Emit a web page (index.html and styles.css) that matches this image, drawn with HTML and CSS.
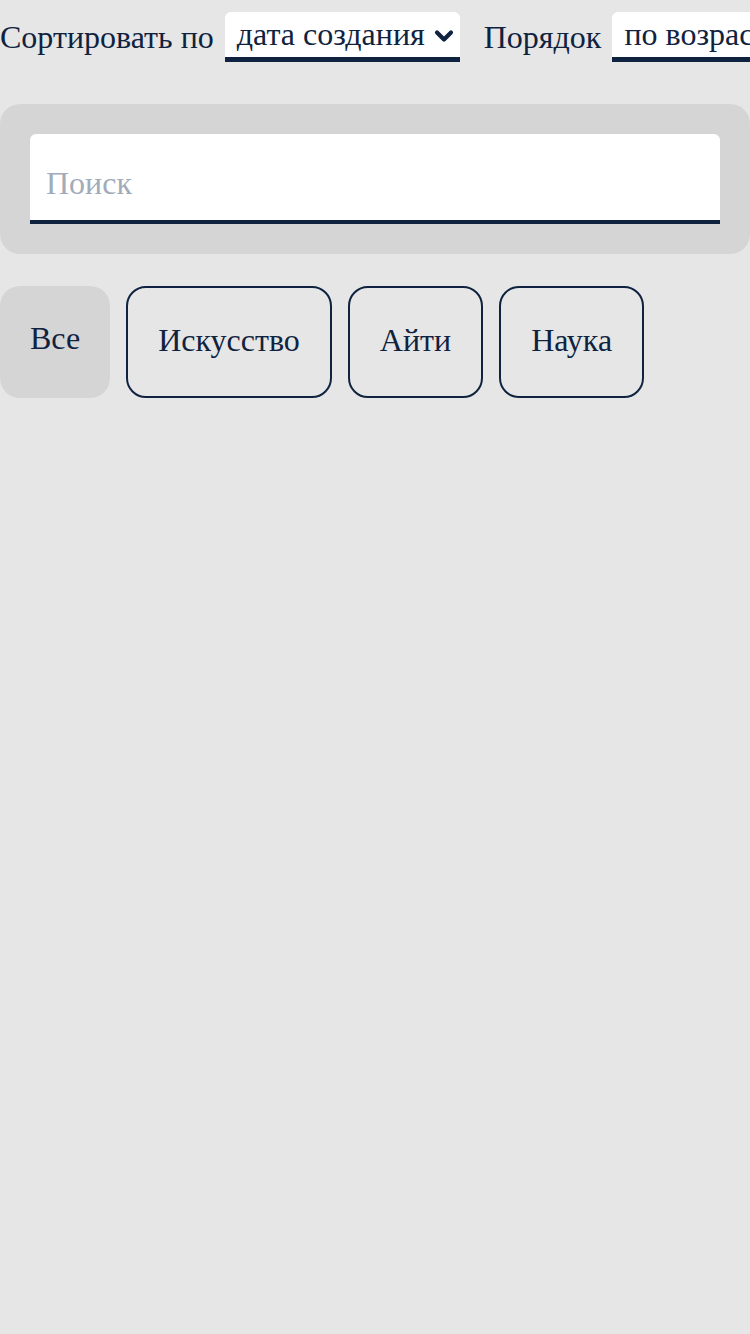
FILE: index.html
```html
<!DOCTYPE html>
<html lang="ru">
<head>
<meta charset="utf-8">
<link rel="stylesheet" href="styles.css">
</head>
<body>
<div class="page">
  <div class="sort-row">
    <span class="label">Сортировать по</span>
    <div class="select">
      <span class="select-text">дата создания</span>
      <svg class="chev" width="20" height="14" viewBox="0 0 20 14"><path d="M3 3.5 L10 10.5 L17 3.5" fill="none" stroke="#0f2340" stroke-width="4.2" stroke-linecap="round" stroke-linejoin="round"/></svg>
    </div>
    <span class="label label-order">Порядок</span>
    <div class="select">
      <span class="select-text">по возрастанию</span>
      <svg class="chev" width="20" height="14" viewBox="0 0 20 14"><path d="M3 3.5 L10 10.5 L17 3.5" fill="none" stroke="#0f2340" stroke-width="4.2" stroke-linecap="round" stroke-linejoin="round"/></svg>
    </div>
  </div>
  <div class="search-box">
    <div class="search-input"><span class="placeholder">Поиск</span></div>
  </div>
  <div class="chips">
    <div class="chip chip-active">Все</div>
    <div class="chip">Искусство</div>
    <div class="chip">Айти</div>
    <div class="chip">Наука</div>
  </div>
</div>
</body>
</html>
```

FILE: styles.css
```css
html, body {
  margin: 0;
  padding: 0;
  background: #e6e6e6;
  overflow: hidden;
}
body {
  width: 750px;
  height: 1334px;
  font-family: "Liberation Serif", "Times New Roman", serif;
  font-size: 32px;
  color: #0f2340;
}
.page {
  width: 750px;
  overflow: hidden;
}
.sort-row {
  display: flex;
  align-items: center;
  white-space: nowrap;
  padding-top: 12px;
  height: 50px;
}
.label {
  flex-shrink: 0;
  margin-right: 11px;
}
.label-order {
  margin-left: 24px;
}
.select {
  display: flex;
  align-items: center;
  flex-shrink: 0;
  height: 45px;
  background: #ffffff;
  border-bottom: 5px solid #0f2340;
  border-radius: 6px 6px 0 0;
  padding: 0 6px 0 12px;
}
.select-text {
  margin-right: 9px;
}
.chev {
  display: block;
  margin-top: 2px;
}
.search-box {
  margin-top: 42px;
  background: #d5d5d5;
  border-radius: 20px;
  padding: 30px;
}
.search-input {
  height: 74px;
  background: #ffffff;
  border-bottom: 4px solid #0f2340;
  border-radius: 6px 6px 0 0;
  display: flex;
  align-items: center;
  padding: 12px 16px 0;
}
.placeholder {
  color: #a2abb9;
}
.chips {
  display: flex;
  gap: 16px;
  margin-top: 32px;
  align-items: stretch;
}
.chip {
  border: 2px solid #0f2340;
  border-radius: 20px;
  padding: 34px 30px 38px;
  line-height: 36px;
}
.chip-active {
  border: 0;
  background: #d5d5d5;
}
```
